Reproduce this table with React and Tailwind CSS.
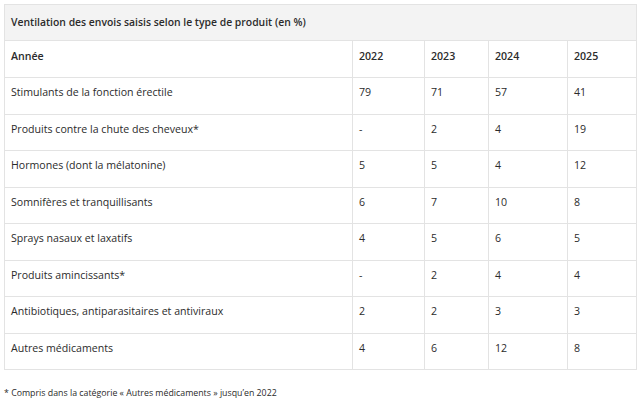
const rows = [
  ['Stimulants de la fonction érectile', '79', '71', '57', '41'],
  ['Produits contre la chute des cheveux*', '-', '2', '4', '19'],
  ['Hormones (dont la mélatonine)', '5', '5', '4', '12'],
  ['Somnifères et tranquillisants', '6', '7', '10', '8'],
  ['Sprays nasaux et laxatifs', '4', '5', '6', '5'],
  ['Produits amincissants*', '-', '2', '4', '4'],
  ['Antibiotiques, antiparasitaires et antiviraux', '2', '2', '3', '3'],
  ['Autres médicaments', '4', '6', '12', '8'],
];

const years = ['2022', '2023', '2024', '2025'];

export default function App() {
  return (
    <div className="w-[640px] h-[404px] bg-white pt-[4px] px-[4px] text-[#2b2b2b] font-['Open_Sans',sans-serif] text-[10.6px]">
      <table className="w-[632px] border-collapse table-fixed">
        <colgroup>
          <col className="w-[348px]" />
          <col className="w-[72px]" />
          <col className="w-[64px]" />
          <col className="w-[79px]" />
          <col className="w-[69px]" />
        </colgroup>
        <thead>
          <tr className="h-[36px]">
            <th colSpan={5} className="bg-[#f3f3f3] border border-[#e3e3e3] text-left align-top pt-[9px] px-[6px] font-semibold text-[10.4px] leading-[16px]">
              Ventilation des envois saisis selon le type de produit (en %)
            </th>
          </tr>
          <tr className="h-[37px]">
            <th className="border border-[#e3e3e3] text-left align-top pt-[7px] px-[6px] font-semibold text-[10.6px] leading-[16px]">Année</th>
            {years.map((y) => (
              <th key={y} className="border border-[#e3e3e3] text-left align-top pt-[7px] px-[6px] font-semibold text-[10.6px] leading-[16px]">{y}</th>
            ))}
          </tr>
        </thead>
        <tbody>
          {rows.map((r) => (
            <tr key={r[0]} className="h-[36.5px]">
              {r.map((c, i) => (
                <td key={i} className="border border-[#e3e3e3] align-top pt-[6px] px-[6px] leading-[16px]">{c}</td>
              ))}
            </tr>
          ))}
        </tbody>
      </table>
      <p className="mt-[17px] text-[8.8px] leading-[12px]">* Compris dans la catégorie « Autres médicaments » jusqu’en 2022</p>
    </div>
  );
}
